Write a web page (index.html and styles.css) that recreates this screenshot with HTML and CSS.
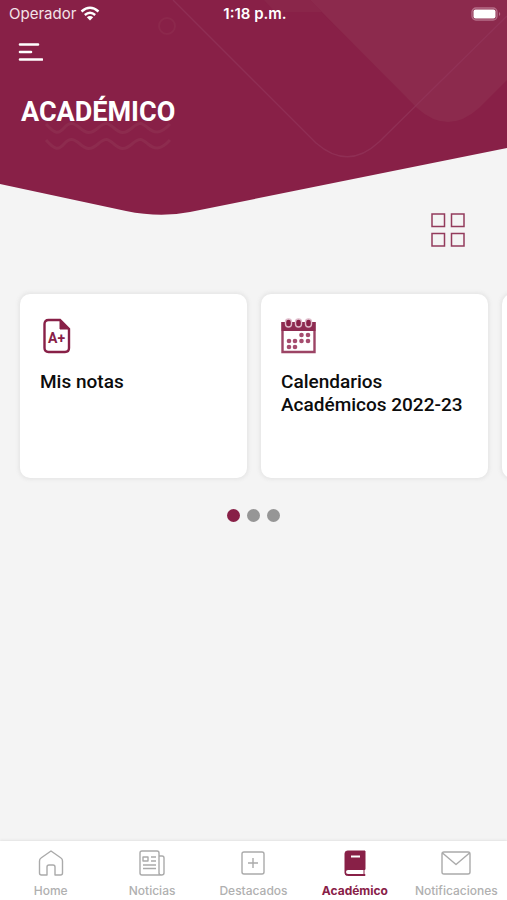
FILE: index.html
```html
<!DOCTYPE html>
<html lang="es">
<head>
<meta charset="utf-8">
<meta name="viewport" content="width=device-width, initial-scale=1">
<title>Académico</title>
<link rel="stylesheet" href="styles.css">
</head>
<body>
<div class="app">
  <header class="hero">
    <svg class="hero-bg" viewBox="0 0 507 216" preserveAspectRatio="none" aria-hidden="true">
      <defs><clipPath id="hero-shape"><path d="M0 0H507V148L190 212Q160 218 126 211L0 184Z"/></clipPath></defs>
      <g clip-path="url(#hero-shape)">
        <rect width="507" height="216" fill="#882047"/>
        <path d="M310 0L417 108Q448 136 479 108L507 80V0Z" fill="#8c2a4d"/>
        <path d="M264 0H310L322 12H275Z" fill="#8a264a"/>
        <path d="M173 0L316 143Q348 171 379 142L507 16" fill="none" stroke="#93345a" stroke-opacity=".7" stroke-width="1.4"/>
        <circle cx="167" cy="26" r="8" fill="none" stroke="#8c284c" stroke-width="2"/>
        <path d="M46 124C54 133 58 135 64 128S74 123 80 128S90 135 98 128S108 123 114 128S124 135 132 128S142 123 148 128S160 135 170 124M46 140C54 149 58 151 64 144S74 139 80 144S90 151 98 144S108 139 114 144S124 151 132 144S142 139 148 144S160 151 170 140" fill="none" stroke="#8d2b4e" stroke-width="3"/>
      </g>
    </svg>
    <div class="status">
      <div class="carrier">
        <span>Operador</span>
        <svg width="20" height="16" viewBox="0 0 20 16" fill="none" stroke="#fff" stroke-width="2.4" aria-hidden="true">
          <path d="M1.5 5.5Q10 -1.8 18.5 5.5M4.8 9Q10 4.6 15.2 9"/>
          <path d="M6.8 11.2Q10 8.6 13.2 11.2L10 14.6Z" fill="#fff" stroke="none"/>
        </svg>
      </div>
      <time class="clock">1:18 p.m.</time>
      <svg class="battery" width="30" height="14" viewBox="0 0 30 14" aria-hidden="true">
        <rect x="1" y="1" width="25" height="12" rx="4" fill="none" stroke="#b56d88" stroke-width="1.3"/>
        <rect x="2.5" y="2.5" width="22" height="9" rx="2" fill="#fff"/>
        <path d="M28 5Q30.5 7 28 9Z" fill="#b56d88"/>
      </svg>
    </div>
    <button class="menu" type="button" aria-label="Menú">
      <svg width="26" height="20" viewBox="0 0 26 20" stroke="#fff" stroke-width="2.6" stroke-linecap="round" aria-hidden="true"><path d="M3 2.5H21M3 10H14M3 17.5H25"/></svg>
    </button>
    <h1 class="title">ACADÉMICO</h1>
  </header>

  <main class="content">
    <div class="tools">
      <button class="view" type="button" aria-label="Vista en cuadrícula">
        <svg width="36" height="36" viewBox="0 0 36 36" fill="none" stroke="#933b5c" stroke-width="1.5" aria-hidden="true"><path d="M2 2H14.5V14.5H2ZM21.500 2H34V14.5H21.5ZM2 21.5H14.5V34H2ZM21.5 21.5H34V34H21.5Z"/></svg>
      </button>
    </div>
    <div class="cards">
      <a class="card" href="#">
        <svg width="36" height="36" viewBox="0 0 36 36" aria-hidden="true">
          <path d="M8.500 2H20L29 11V30Q29 34 25 34H8.500Q4.500 34 4.500 30V6Q4.500 2 8.500 2Z" fill="none" stroke="#882047" stroke-width="2.4"/>
          <path d="M20 2L29 11H20Z" fill="#882047" stroke="#882047"/>
          <text class="grade" x="8" y="25">A+</text>
        </svg>
        <span>Mis notas</span>
      </a>
      <a class="card" href="#">
        <svg width="36" height="36" viewBox="0 0 36 36" aria-hidden="true">
          <path d="M1.5 4V34H33.500V4" fill="none" stroke="#9c4465" stroke-width="2.4"/>
          <path d="M0.500 4H34.500V13H0.500Z" fill="#8e2c52"/>
          <g fill="#882047" stroke="#dfbccb" stroke-width="1.4"><rect x="4.500" y="1" width="6" height="8" rx="3"/><rect x="14.500" y="1" width="6" height="8" rx="3"/><rect x="24.500" y="1" width="6" height="8" rx="3"/></g>
          <g fill="#a54c6e"><circle cx="20.500" cy="17" r="2.300"/><circle cx="27" cy="17" r="2.300"/><circle cx="8" cy="23" r="2.300"/><circle cx="14" cy="23" r="2.300"/><circle cx="20.500" cy="23" r="2.300"/><circle cx="27" cy="23" r="2.300"/><circle cx="8" cy="29" r="2.300"/><circle cx="14" cy="29" r="2.300"/></g>
        </svg>
        <span>Calendarios Académicos 2022-23</span>
      </a>
      <a class="card" href="#" aria-label="Siguiente"></a>
    </div>
    <div class="dots">
      <button class="dot dot-on" type="button" aria-label="Página 1"></button>
      <button class="dot" type="button" aria-label="Página 2"></button>
      <button class="dot" type="button" aria-label="Página 3"></button>
    </div>
  </main>

  <nav class="tabs">
    <a class="tab" href="#">
      <svg width="32" height="28" viewBox="0 0 32 28" aria-hidden="true"><path d="M16 2L26 9Q27.500 10 27.500 12V24Q27.500 26 25.500 26H20V18Q20 16 18 16H14Q12 16 12 18V26H6.500Q4.500 26 4.500 24V12Q4.500 10 6 9Z"/></svg>
      <span>Home</span>
    </a>
    <a class="tab" href="#">
      <svg width="32" height="28" viewBox="0 0 32 28" aria-hidden="true"><path d="M6 2H21Q23 2 23 4V24Q23 26 25.500 26H6Q4 26 4 24V4Q4 2 6 2ZM23 7H26Q28 7 28 9V24Q28 26 25.500 26M7 8H12V12H7ZM15 8H20M15 12H20M7 16H20M7 19.500H20"/></svg>
      <span>Noticias</span>
    </a>
    <a class="tab" href="#">
      <svg width="32" height="28" viewBox="0 0 32 28" aria-hidden="true"><path d="M7 3H25Q27 3 27 5V23Q27 25 25 25H7Q5 25 5 23V5Q5 3 7 3ZM16 9V19M11 14H21"/></svg>
      <span>Destacados</span>
    </a>
    <a class="tab tab-on" href="#" aria-current="page">
      <svg width="32" height="28" viewBox="0 0 32 28" aria-hidden="true"><path d="M8.500 2H26V20.500H25V25.500H26V26.500H8.500Q6 26.500 6 24V4.500Q6 2 8.500 2Z"/><path class="book-pages" d="M9 21H24.500V25H9Q7 25 7 23T9 21Z"/><path class="book-mark" d="M12 7.500H21"/></svg>
      <span>Académico</span>
    </a>
    <a class="tab" href="#">
      <svg width="32" height="28" viewBox="0 0 32 28" aria-hidden="true"><path d="M4 3H28Q30 3 30 5V23Q30 25 28 25H4Q2 25 2 23V5Q2 3 4 3ZM2.500 4L16 15.500L29.500 4"/></svg>
      <span>Notificaciones</span>
    </a>
  </nav>
</div>
</body>
</html>
```
FILE: styles.css
```css
* { box-sizing: border-box; }

body {
  margin: 0;
  background: #f4f4f4;
  color: #0c0c0c;
  font-family: Roboto, "Liberation Sans", sans-serif;
}

a { color: inherit; text-decoration: none; }

button { padding: 0; border: 0; background: none; cursor: pointer; }

svg { display: block; }

.app {
  display: flex;
  flex-direction: column;
  min-height: 100vh;
}

.hero {
  position: relative;
  color: #fff;
  padding-bottom: 86px;
}

.hero-bg {
  position: absolute;
  inset: 0;
  width: 100%;
  height: 100%;
}

.status {
  position: relative;
  display: grid;
  grid-template-columns: 1fr auto 1fr;
  align-items: center;
  height: 28px;
  padding: 0 6px 0 9px;
  font: 400 15px/20px Inter, sans-serif;
}

.carrier { display: flex; align-items: center; gap: 4px; color: #f3e3e9; }

.clock { font-weight: 600; }

.battery { justify-self: end; }

.menu {
  position: relative;
  display: block;
  margin: 14px 0 0 17px;
}

.title {
  position: relative;
  margin: 32px 0 0 21px;
  font-size: 27px;
  line-height: 36px;
  font-weight: 700;
}

.content { flex: 1; }

.tools {
  display: flex;
  justify-content: flex-end;
  padding: 0 41px;
  margin-top: -4px;
}

.view { position: relative; }

.cards {
  display: flex;
  gap: 14px;
  padding: 46px 20px 8px;
  overflow-x: auto;
  scrollbar-width: none;
}

.card {
  flex: 0 0 227px;
  min-height: 184px;
  padding: 24px 12px 24px 20px;
  border-radius: 10px;
  background: #fff;
  box-shadow: 0 0 4px 1px #e2e2e2;
  font-size: 19px;
  line-height: 23px;
  font-weight: 500;
}

.card svg { margin-bottom: 16px; }

.grade {
  fill: #882047;
  font: 700 14px Roboto, sans-serif;
}

.dots {
  display: flex;
  justify-content: center;
  gap: 7px;
  margin-top: 23px;
}

.dot {
  width: 13px;
  height: 13px;
  border-radius: 50%;
  background: #969696;
}

.dot-on { background: #882047; }

.tabs {
  display: grid;
  grid-template-columns: repeat(5, 1fr);
  padding: 8px 0 1px;
  background: #fff;
  box-shadow: 0 0 3px #d4d4d4;
}

.tab {
  display: flex;
  flex-direction: column;
  align-items: center;
  gap: 6px;
  color: #b0b0b0;
  font: 500 12px/16px Inter, sans-serif;
}

.tab svg {
  fill: none;
  stroke: #aaa;
  stroke-width: 1.4;
  stroke-linejoin: round;
}

.tab-on { color: #882047; font-weight: 700; }

.tab-on svg { fill: #882047; stroke: #882047; stroke-width: 1; }

.tab .book-pages { fill: #fff; stroke: none; }

.tab .book-mark { stroke: #fff; stroke-width: 2; }
```
